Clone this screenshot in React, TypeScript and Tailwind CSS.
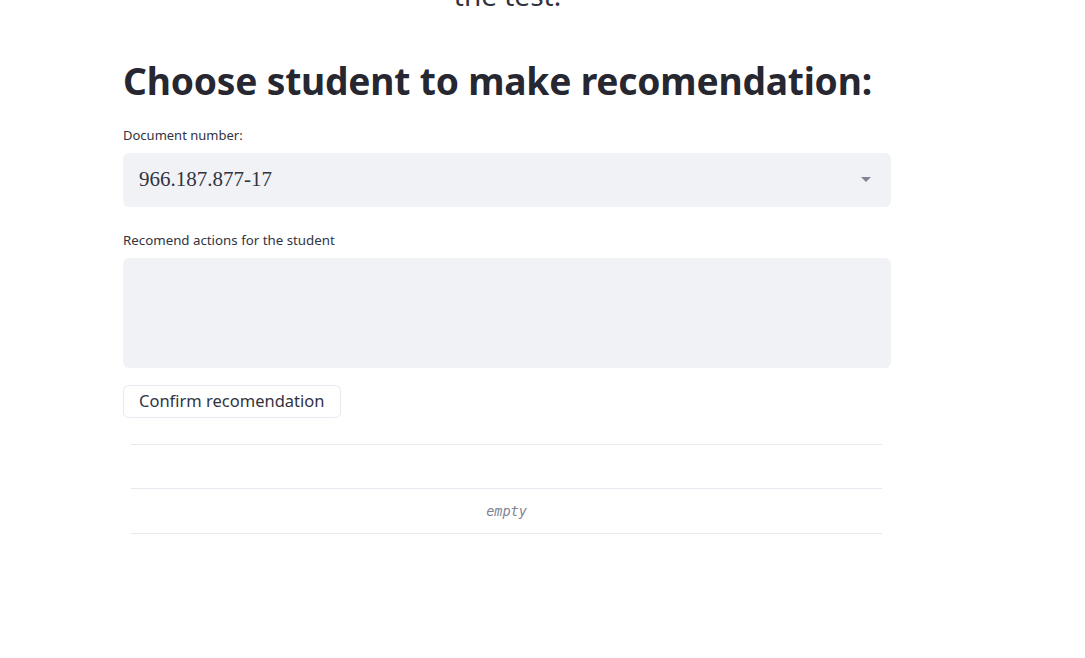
export default function App() {
  return (
    <main className="relative h-[658px] w-[1085px] overflow-hidden bg-white text-[#262730]" style={{ fontFamily: '"Noto Sans", "Open Sans", sans-serif' }}>
      <div className="-mt-[22px] flex flex-col items-center">
        <p className="h-[34px] pr-[70px] text-[28px] leading-[34px] text-[#31333f]">the test.</p>
      </div>
      <div className="ml-[123px] w-[768px]">
        <h1 className="mt-[44px] text-[37.2px] font-bold leading-[50px] tracking-[-0.2px] text-[#262730]">
          Choose student to make recomendation:
        </h1>
        <label className="mt-[20px] block text-[13px] leading-[18px] text-[#31333f]">Document number:</label>
        <div className="mt-[9px] flex h-[54px] items-center justify-between rounded-md bg-[#f0f2f6] pl-4 pr-[20px]">
          <span className="text-[21px] text-[#31333f]" style={{ fontFamily: '"Liberation Serif", "DejaVu Serif", serif' }}>966.187.877-17</span>
          <svg width="10" height="6" viewBox="0 0 10 6"><path d="M0 0h10L5 5z" fill="#808495" /></svg>
        </div>
        <label className="mt-[24px] block text-[13.3px] leading-[18px] text-[#31333f]">Recomend actions for the student</label>
        <div className="mt-[9px] h-[110px] rounded-md bg-[#f0f2f6]" />
        <button className="mt-[17px] h-[33px] rounded-md border border-[#e6e9ef] bg-white px-[15px] text-[16.5px] text-[#31333f]">
          Confirm recomendation
        </button>
        <div className="ml-[8px] mt-[26px] w-[751px]">
          <div className="h-[45px] border-y border-[#e6e9ef]" />
          <div className="flex h-[45px] items-center justify-center border-b border-[#e6e9ef] text-[13.5px] italic text-[#808495]" style={{ fontFamily: '"DejaVu Sans Mono", monospace' }}>
            empty
          </div>
        </div>
      </div>
    </main>
  );
}
